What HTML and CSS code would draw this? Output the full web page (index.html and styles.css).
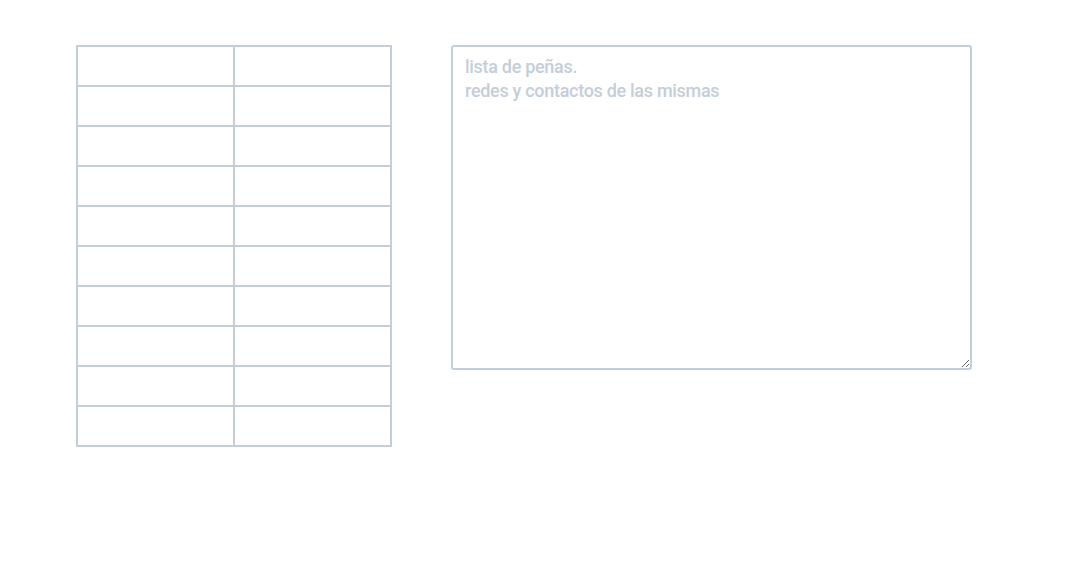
FILE: index.html
```html
<!DOCTYPE html>
<html lang="es">
<head>
<meta charset="utf-8">
<title>Peñas</title>
<link rel="stylesheet" href="styles.css">
</head>
<body>
<main class="page">
  <table class="grid">
    <tbody>
      <tr><td></td><td></td></tr>
      <tr><td></td><td></td></tr>
      <tr><td></td><td></td></tr>
      <tr><td></td><td></td></tr>
      <tr><td></td><td></td></tr>
      <tr><td></td><td></td></tr>
      <tr><td></td><td></td></tr>
      <tr><td></td><td></td></tr>
      <tr><td></td><td></td></tr>
      <tr><td></td><td></td></tr>
    </tbody>
  </table>
  <textarea class="notes" placeholder="lista de peñas.&#10;redes y contactos de las mismas"></textarea>
</main>
</body>
</html>
```

FILE: styles.css
```css
html, body {
  margin: 0;
  padding: 0;
  background: #ffffff;
}

.page {
  display: flex;
  align-items: flex-start;
  gap: 59px;
  padding: 45px 0 0 76px;
}

.grid {
  border-collapse: collapse;
  border: 2px solid #c3ced9;
}

.grid td {
  width: 155px;
  height: 38px;
  padding: 0;
  border: 2px solid #c3ced9;
}

.notes {
  box-sizing: border-box;
  width: 521px;
  height: 325px;
  margin: 0;
  border: 2px solid #c3ced9;
  border-radius: 3px;
  padding: 8px 12px;
  font-family: Roboto, "Open Sans", sans-serif;
  font-weight: 500;
  font-size: 18px;
  letter-spacing: -0.3px;
  line-height: 24px;
  color: #5a6572;
  background: #ffffff;
  outline: none;
}

.notes::placeholder {
  color: #c3ced9;
  opacity: 1;
}
```
